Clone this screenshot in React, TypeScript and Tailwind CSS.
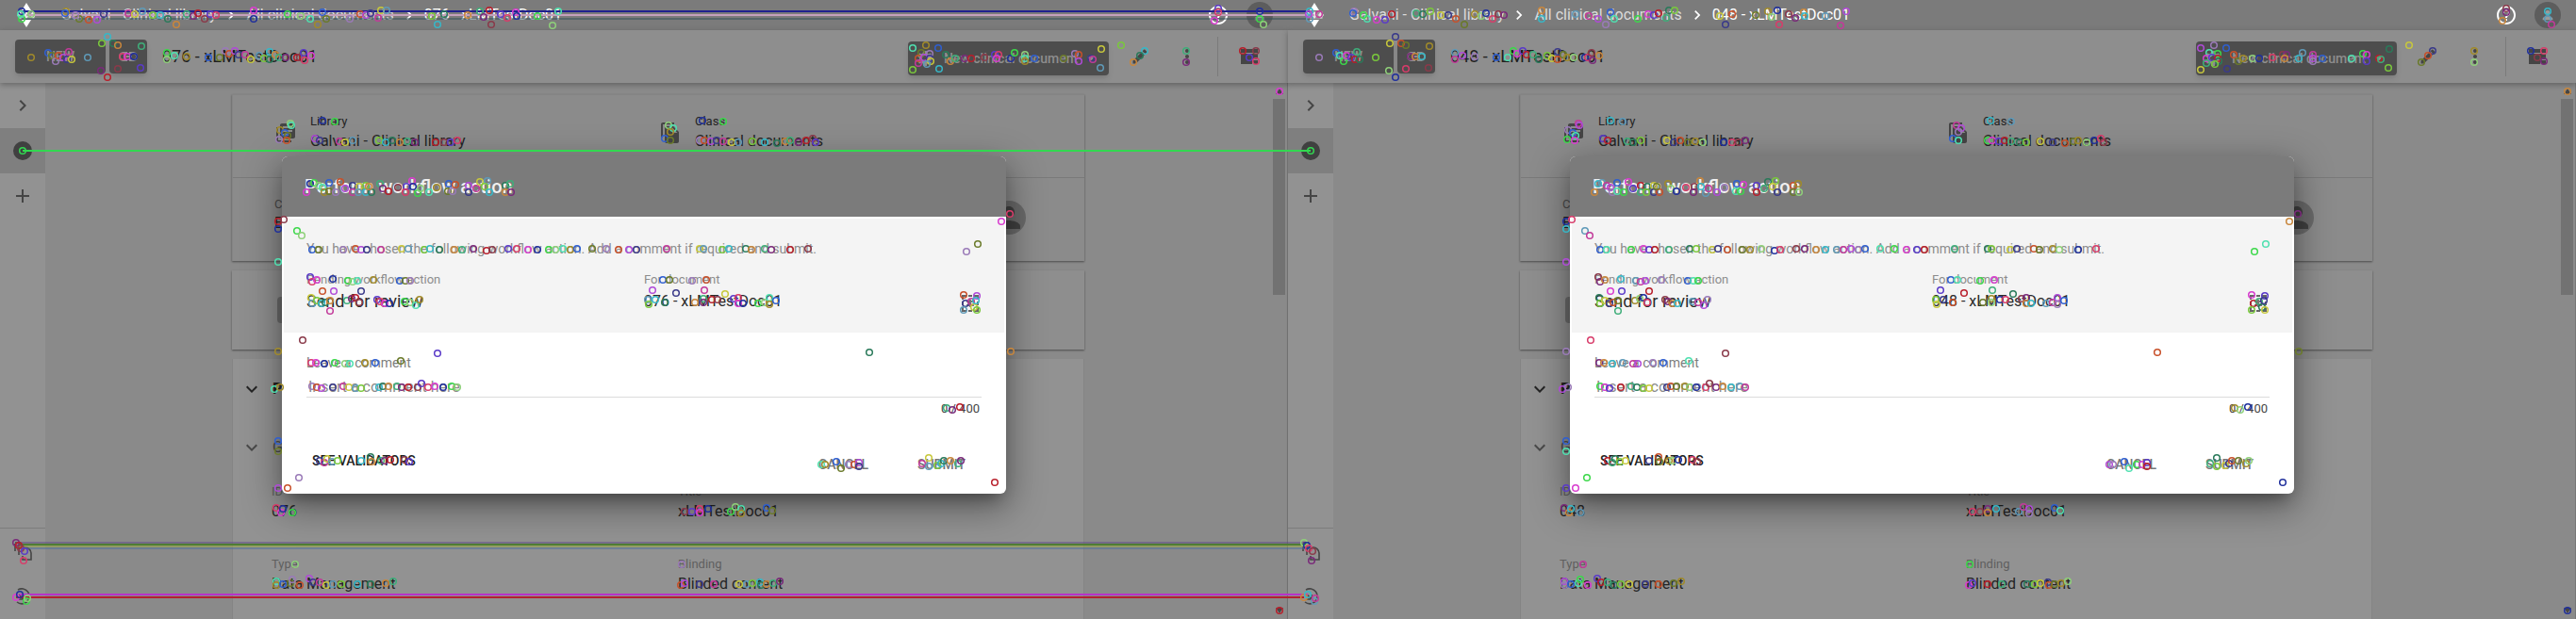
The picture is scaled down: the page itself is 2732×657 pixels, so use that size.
import React from "react";
import {
  MdAdd,
  MdArrowDropDown,
  MdChevronRight,
  MdEdit,
  MdExpandMore,
  MdFileCopy,
  MdHelpOutline,
  MdLibraryBooks,
  MdLink,
  MdMoreVert,
  MdPerson,
  MdSettings,
} from "react-icons/md";

type Point = [number, number];

/* Keypoints of one panel; each has a twin one panel to the right. */
const keypoints: Point[] = [
  [23, 12], [23, 20], [33, 15], [22, 15],
  [70, 12], [69, 14], [84, 20], [80, 16], [94, 21], [103, 21], [110, 15], [136, 14], [143, 15], [151, 12], [162, 16], [170, 16], [178, 20], [187, 26], [198, 15], [205, 17], [210, 14], [217, 20], [223, 15], [229, 16],
  [269, 11], [269, 20], [305, 15], [319, 17], [329, 20], [337, 26], [342, 13], [346, 20], [371, 20], [382, 15], [388, 16], [393, 14], [401, 19], [404, 11], [410, 11],
  [458, 17], [464, 26], [471, 15], [496, 16], [509, 12], [513, 18], [519, 11], [521, 26], [531, 15], [538, 19], [547, 13], [548, 17], [570, 17], [586, 27], [592, 12],
  [33, 61], [51, 56], [55, 59], [59, 65], [62, 59], [67, 61], [71, 63], [73, 55], [76, 63], [93, 61], [108, 46], [114, 39], [120, 46], [125, 48], [150, 49], [107, 75], [114, 82], [125, 73], [149, 72], [130, 60], [135, 60], [142, 60],
  [177, 56], [177, 63], [185, 59], [198, 60], [221, 61], [233, 61], [239, 54], [243, 57], [249, 54], [253, 58], [260, 58], [266, 63], [275, 59], [280, 62], [286, 55], [286, 63], [292, 58], [296, 61], [303, 61], [315, 61], [318, 61], [322, 56], [323, 64], [330, 59],
  [342, 128], [355, 129], [308, 131], [309, 133], [297, 138], [302, 141], [305, 144], [296, 148], [304, 149],
  [334, 147], [339, 149], [360, 150], [366, 151], [374, 149], [402, 149], [409, 151], [416, 149], [424, 151], [432, 150], [440, 151], [462, 151], [471, 151], [478, 151], [485, 149],
  [325, 204], [329, 195], [333, 194], [338, 197], [342, 199], [344, 204], [349, 194], [349, 203], [356, 204], [361, 193], [366, 200], [374, 197], [374, 204], [381, 198], [380, 204], [388, 197], [388, 204], [394, 204], [391, 198], [403, 195], [406, 200], [412, 203], [422, 199], [431, 198], [430, 204], [437, 192], [438, 198], [443, 205], [446, 200], [455, 204], [463, 199], [476, 195], [475, 203], [480, 203], [483, 196], [497, 197], [497, 204], [505, 200], [509, 193], [517, 192], [514, 198], [519, 204], [536, 197], [536, 204], [541, 195], [542, 204],
  [295, 235], [301, 233],
  [1292, 9], [1292, 13], [1288, 22], [1336, 12], [1336, 20], [1340, 26],
  [968, 51], [982, 48], [995, 51], [977, 56], [986, 57], [974, 62], [980, 61], [986, 62], [974, 67], [987, 65], [983, 68], [968, 74], [996, 73], [1003, 58], [1008, 65], [1013, 62], [1023, 62], [1030, 62], [1044, 61], [1055, 58], [1059, 58], [1057, 62], [1072, 62], [1076, 56], [1087, 58], [1087, 62], [1087, 65], [1097, 62], [1128, 62], [1140, 57], [1144, 58], [1144, 65], [1157, 62], [1159, 63], [1168, 52], [1167, 72], [1189, 48],
  [1214, 54], [1209, 59], [1202, 66], [1258, 54], [1258, 66], [1318, 54], [1332, 54], [1325, 61], [1332, 65],
  [1357, 97], [745, 128], [767, 129], [709, 133], [714, 136], [711, 140], [705, 147], [711, 149],
  [742, 149], [747, 149], [754, 150], [760, 149], [767, 150], [776, 151], [783, 151], [798, 150], [811, 151], [824, 152], [833, 150], [838, 149], [847, 151], [855, 149], [862, 147], [865, 151],
  [1071, 227], [1062, 235], [295, 243], [315, 245], [320, 250], [295, 278], [295, 373],
  [331, 265], [338, 265], [364, 265], [377, 264], [383, 265], [389, 265], [404, 265], [426, 264], [433, 264], [450, 265], [456, 264], [466, 265], [482, 265], [490, 265], [502, 264], [516, 266], [522, 265], [539, 264], [548, 264], [560, 265], [570, 265], [582, 265], [589, 265], [597, 264], [605, 265], [612, 264], [628, 264], [643, 264], [656, 265], [667, 265], [675, 265],
  [707, 264], [742, 264], [746, 264], [766, 265], [773, 264], [791, 264], [797, 265], [811, 264], [818, 265], [838, 265], [857, 264],
  [329, 294], [331, 299], [336, 297], [353, 296], [369, 298], [374, 299], [379, 298], [396, 297], [424, 298], [430, 298], [435, 298],
  [342, 309], [354, 309], [383, 309], [350, 330],
  [330, 316], [331, 322], [336, 319], [341, 322], [345, 321], [350, 319], [368, 319], [373, 317], [377, 316], [381, 321], [400, 318], [403, 320], [408, 322], [413, 322], [429, 320], [435, 321], [441, 324], [445, 318],
  [703, 297], [710, 297], [734, 298], [749, 297], [692, 308], [717, 311], [747, 308], [769, 312],
  [687, 318], [688, 323], [695, 318], [705, 321], [737, 321], [746, 317], [746, 321], [755, 318], [761, 318], [778, 317], [783, 316], [783, 322], [788, 322], [804, 322], [811, 321], [816, 316], [816, 323], [823, 319],
  [1037, 259], [1025, 267], [1022, 313], [1036, 314], [1024, 322], [1030, 320], [1033, 326], [1022, 329], [1036, 329], [1035, 319],
  [922, 374], [1072, 373], [1004, 433], [1010, 435], [1018, 432], [321, 361], [464, 375],
  [330, 385], [335, 385], [344, 386], [355, 385], [366, 386], [371, 386], [387, 385], [398, 385], [425, 383],
  [331, 410], [336, 411], [341, 412], [353, 411], [364, 410], [370, 411], [377, 412], [383, 412], [402, 411], [406, 410], [412, 410], [421, 410], [426, 411], [433, 411], [443, 411], [447, 407], [454, 411], [461, 410], [470, 411], [479, 410], [485, 411],
  [291, 413], [297, 411], [295, 468], [295, 479], [317, 507], [305, 518], [295, 518],
  [339, 489], [344, 491], [347, 487], [352, 490], [358, 489], [383, 489], [393, 485], [394, 490], [404, 489], [408, 489], [414, 488], [429, 488], [434, 490],
  [293, 539], [298, 544], [300, 540], [310, 544], [313, 599],
  [293, 617], [293, 621], [300, 620], [308, 619], [310, 615], [318, 621], [328, 614], [332, 618], [339, 618], [346, 621], [353, 620], [362, 620], [379, 620], [393, 620], [409, 619], [417, 617],
  [17, 576], [20, 579], [22, 582], [26, 585], [25, 595], [17, 634], [21, 631], [28, 638], [29, 635],
  [871, 493], [875, 493], [887, 490], [892, 497], [900, 493], [906, 493], [911, 491], [911, 495],
  [978, 492], [985, 486], [985, 495], [994, 494], [998, 492], [1001, 489], [1008, 489], [1016, 492], [1019, 489], [1055, 512],
  [726, 543], [734, 543], [742, 540], [742, 544], [751, 540], [775, 543], [780, 538], [786, 540], [786, 545], [813, 539], [819, 542],
  [723, 599], [722, 621], [726, 619], [742, 620], [757, 620], [784, 620], [792, 620], [798, 619], [806, 618], [807, 621], [813, 620], [820, 619], [827, 617], [1357, 648],
];

const palette = [
  "#1f2f9c", "#3fae7a", "#c23a9a", "#a08a2a", "#5a3ac8", "#36b8c8", "#c8502a", "#3cd84a", "#7a2a7a",
  "#c8c83c", "#2f5fd0", "#d83c6a", "#2a7a5a", "#b04ad8", "#8fd07a", "#b81e2a", "#5f9ab8", "#6a7a2a",
  "#d83ccf", "#c8863c", "#3a3a8a", "#4fe0b0", "#8a3a4a", "#7ac83c", "#9a7ab8",
];

const matches: { y: number; x: number; color: string; width: number }[] = [
  { y: 12, x: 23, color: "#20208f", width: 2 },
  { y: 16, x: 28, color: "#c4a0bd", width: 2 },
  { y: 20, x: 23, color: "#33505a", width: 1 },
  { y: 160, x: 24, color: "#32d850", width: 2 },
  { y: 576, x: 17, color: "#5f4a86", width: 1 },
  { y: 578, x: 20, color: "#4f7d33", width: 2 },
  { y: 580, x: 20, color: "#97a83e", width: 1 },
  { y: 582, x: 22, color: "#4a6f9c", width: 1 },
  { y: 631, x: 21, color: "#b832c8", width: 2 },
  { y: 634, x: 17, color: "#b3202e", width: 2 },
];

const SHIFT = 1366;

function MatchOverlay() {
  return (
    <svg
      width="2732"
      height="657"
      viewBox="0 0 2732 657"
      fill="none"
      aria-hidden="true"
    >
      {matches.map((m) => (
        <path key={m.y} d={`M${m.x} ${m.y}H${m.x + SHIFT}`} stroke={m.color} strokeWidth={m.width} />
      ))}
      {keypoints.map(([x, y], i) => (
        <g key={i} strokeWidth="1.5">
          <circle cx={x} cy={y} r="3.3" stroke={palette[(i * 7) % palette.length]} />
          <circle cx={x + SHIFT} cy={y} r="3.3" stroke={palette[(i * 11 + 5) % palette.length]} />
        </g>
      ))}
      {[24, 24 + SHIFT].map((x) => (
        <circle key={x} cx={x} cy="160" r="3.3" stroke="#32d850" strokeWidth="1.5" />
      ))}
    </svg>
  );
}

function Logo() {
  return (
    <svg width="20" height="26" viewBox="0 0 20 26" aria-hidden="true">
      <path d="M10 0l5 8H5zM10 26l5-8H5z" fill="#fff" />
      <path d="M1 9h18v8H1z" fill="#b5b5b5" opacity=".5" />
      <path d="M3 9l3 4-3 4-3-4zM17 9l3 4-3 4-3-4zM10 9l3 4-3 4-3-4z" fill="#e6e6e6" />
    </svg>
  );
}

function TopBar({ doc }: { doc: string }) {
  return (
    <header className="flex h-8 shrink-0 items-center bg-[#7b7b7b] pl-[18px] pr-4 text-base text-[#dcdcdc]">
      <Logo />
      <nav aria-label="Breadcrumb" className="ml-[27px] flex items-center">
        <a href="#library">Galvani - Clinical library</a>
        <MdChevronRight className="mx-1.5 size-5 text-white" />
        <a href="#documents">All clinical documents</a>
        <MdChevronRight className="mx-1.5 size-5 text-white" />
        <a href="#document" className="text-white">{doc}</a>
      </nav>
      <div className="ml-auto flex items-center gap-[18px]">
        <button aria-label="Help">
          <MdHelpOutline className="size-6 text-white" />
        </button>
        <button aria-label="Account" className="flex size-7 items-center justify-center rounded-full bg-[#5d5d5d]">
          <MdPerson className="size-4 text-[#9a9a9a]" />
        </button>
      </div>
    </header>
  );
}

function Toolbar({ doc }: { doc: string }) {
  return (
    <div className="z-10 flex h-14 shrink-0 items-center bg-[#8e8e8e] pl-4 pr-8 shadow-[0_2px_6px_rgba(0,0,0,0.3)]">
      <div className="flex gap-1 text-sm font-medium text-[#8e8e8e]">
        <button className="h-9 w-24 rounded bg-[#4d4d4d] shadow-md">NEW</button>
        <button aria-label="Copy link" className="flex h-9 w-10 items-center justify-center rounded bg-[#4d4d4d] shadow-md">
          <MdLink className="size-6" />
        </button>
      </div>
      <h1 className="ml-4 text-lg text-[#1f1f1f]">{doc}</h1>
      <div className="ml-auto flex items-center text-[#454545]">
        <button className="mt-1 flex h-9 w-[213px] items-center rounded-sm bg-[#4d4d4d] pl-2 text-sm font-medium text-[#8e8e8e] shadow-md">
          <MdSettings className="mr-2.5 size-5" />
          New clinical document
          <MdArrowDropDown className="ml-1 size-5" />
        </button>
        <button aria-label="Edit" className="ml-[23px]">
          <MdEdit className="size-5" />
        </button>
        <button aria-label="More actions" className="ml-7">
          <MdMoreVert className="size-6" />
        </button>
        <span className="ml-5 h-[42px] w-px bg-[#7a7a7a]" />
        <button aria-label="Table view" className="ml-6">
          <svg width="18" height="16" viewBox="0 0 18 16" fill="currentColor" aria-hidden="true">
            <path d="M0 0h18v4H0zM0 5h18v6h-6v5H0z" />
            <path d="M13 12h5v4h-5z" />
          </svg>
        </button>
      </div>
    </div>
  );
}

function Sidebar() {
  return (
    <aside className="flex w-12 shrink-0 flex-col bg-[#929292] text-[#454545] shadow-[1px_0_3px_rgba(0,0,0,0.25)]">
      <button aria-label="Expand" className="flex h-12 items-center justify-center">
        <MdChevronRight className="size-6" />
      </button>
      <button aria-label="Information" className="flex h-12 items-center justify-center bg-[#7f7f7f]">
        <span className="flex size-5 items-center justify-center rounded-full bg-[#404040]" />
      </button>
      <button aria-label="Add" className="flex h-12 items-center justify-center">
        <MdAdd className="size-6" />
      </button>
      <div className="mt-auto flex flex-col border-t border-[#7c7c7c]">
        <button aria-label="Clipboard" className="flex h-12 items-center justify-center">
          <svg width="20" height="22" viewBox="0 0 20 22" fill="none" stroke="currentColor" strokeWidth="1.6" aria-hidden="true">
            <path d="M2 11V3M6 15V7M2 2h6M6 7h3M12 7h1c3 0 6 3 6 6v7h-9v-4" />
          </svg>
        </button>
        <button aria-label="History" className="flex h-12 items-center justify-center">
          <svg width="20" height="20" viewBox="0 0 20 20" fill="none" stroke="currentColor" strokeWidth="1.6" aria-hidden="true">
            <path d="M5 3a8 8 0 1 1-1 13M6 8l5 5M11 8v5H6" />
          </svg>
        </button>
      </div>
    </aside>
  );
}

function Field({ label, value }: { label: string; value: string }) {
  return (
    <div>
      <dt className="text-[13px] leading-4 text-[#5f5f5f]">{label}</dt>
      <dd className="mt-px text-base leading-6 text-[#242424]">{value}</dd>
    </div>
  );
}

function Record({ number }: { number: string }) {
  return (
    <main className="min-w-0 flex-1 overflow-hidden bg-[#8a8a8a] pt-3 text-[#242424]">
      <div className="mx-auto flex h-full max-w-[904px] flex-col">
        <section className="h-[177px] shrink-0 border-l border-t border-[#848484] bg-[#8b8b8b] shadow-[0_1px_2px_rgba(0,0,0,0.45)]">
          <div className="grid h-[88px] grid-cols-[408px_1fr] items-start border-b border-[#7a7a7a] pl-[44px] pt-5">
            {[
              { label: "Library", value: "Galvani - Clinical library", Icon: MdLibraryBooks },
              { label: "Class", value: "Clinical documents", Icon: MdFileCopy },
            ].map(({ label, value, Icon }) => (
              <div key={label} className="flex">
                <Icon className="mr-[14px] mt-2 size-6 text-[#454545]" />
                <div>
                  <p className="text-[13px] leading-4">{label}</p>
                  <p className="mt-px text-base leading-6">{value}</p>
                </div>
              </div>
            ))}
          </div>
          <div className="flex items-start justify-between pl-[44px] pr-[62px] pt-5">
            <div>
              <p className="text-[13px] leading-4 text-[#4a4a4a]">Created by</p>
              <p className="text-base leading-6">Editor</p>
            </div>
            <span className="mt-1 flex size-9 items-end justify-center rounded-full bg-[#6a6a6a]">
              <MdPerson className="size-9 text-[#404040]" />
            </span>
          </div>
        </section>
        <section className="mt-2.5 flex h-[84px] shrink-0 items-center bg-[#8e8e8e] pl-12 shadow-[0_1px_2px_rgba(0,0,0,0.45)]">
          <span className="h-7 w-8 rounded bg-[#6c6c6c]" />
        </section>
        <section className="mt-2.5 flex-1 border-x border-[#848484] bg-[#929292] pl-2 pt-5">
          <h2 className="flex h-6 items-center gap-2.5 text-base font-bold">
            <MdExpandMore className="size-6" />
            Properties
          </h2>
          <h3 className="mt-[38px] flex h-6 items-center gap-2.5 text-base text-[#4a4a4a]">
            <MdExpandMore className="size-6" />
            General
          </h3>
          <dl className="mt-[27px] grid grid-cols-[431px_1fr] gap-y-9 pl-[33px]">
            <Field label="ID" value={number} />
            <Field label="Title" value="xLMTestDoc01" />
            <Field label="Type" value="Data Management" />
            <Field label="Blinding" value="Blinded content" />
          </dl>
        </section>
      </div>
    </main>
  );
}

function WorkflowDialog({ doc, id }: { doc: string; id: string }) {
  return (
    <div
      role="dialog"
      aria-labelledby={`${id}-title`}
      className="flex w-[768px] flex-col overflow-hidden rounded-md bg-white shadow-[0_11px_15px_-7px_rgba(0,0,0,0.3),0_12px_38px_3px_rgba(0,0,0,0.4)]"
    >
      <h2 id={`${id}-title`} className="flex h-16 items-center bg-[#7b7b7b] px-6 text-xl font-medium text-[#f0f0f0]">
        Perform workflow action
      </h2>
      <div className="mx-0.5 mt-0.5 bg-[#f4f4f4] px-6 pb-[21px] pt-[22px] text-[#8c8c8c]">
        <p className="text-sm leading-5">
          You have chosen the following workflow action. Add a comment if required and submit.
        </p>
        <div className="mt-[15px] grid grid-cols-2">
          <div>
            <p className="text-[13px] leading-4">Pending workflow action</p>
            <p className="mt-[3px] text-lg leading-6 text-[#2b2b2b]">Send for review</p>
          </div>
          <div className="flex items-end justify-between">
            <div>
              <p className="text-[13px] leading-4">For document</p>
              <p className="mt-[3px] text-base leading-6 text-[#2b2b2b]">{doc}</p>
            </div>
            <svg className="mr-0.5" width="20" height="20" viewBox="0 0 20 20" fill="none" stroke="#666" strokeWidth="2" aria-hidden="true">
              <path d="M2 6V2h4M8 2h4M14 2h4v4M18 8v4M18 14v4h-4M12 18H8M6 18H2v-4M2 12V8" />
              <path d="M6 8h8M6 12h8M10 6v8" stroke="#777" />
            </svg>
          </div>
        </div>
      </div>
      <form className="px-[26px] pb-[13px] pt-6" onSubmit={(e) => e.preventDefault()}>
        <label htmlFor={`${id}-comment`} className="block text-sm leading-4 text-[#7d7d7d]">
          Leave a comment
        </label>
        <input
          id={`${id}-comment`}
          placeholder="Insert a comment here"
          className="mt-1 block h-[25px] w-full border-b border-[#dcdcdc] px-0.5 pt-1 text-base outline-none placeholder:text-[#8c8c8c]"
        />
        <p className="mt-1 pr-0.5 text-right text-[13px] leading-4 text-[#444]">0 / 400</p>
        <div className="mt-[29px] flex justify-between text-sm font-medium">
          <button type="button" className="h-9 px-1.5 text-[#1f1f1f]">SEE VALIDATORS</button>
          <div className="mt-1 flex gap-[18px] text-[#777]">
            <button type="button" className="h-9 px-[17px]">CANCEL</button>
            <button type="submit" className="h-9 px-[17px]">SUBMIT</button>
          </div>
        </div>
      </form>
    </div>
  );
}

function Panel({ number }: { number: string }) {
  const doc = `${number} - xLMTestDoc01`;
  return (
    <div className="relative flex min-w-0 flex-col">
      <TopBar doc={doc} />
      <Toolbar doc={doc} />
      <div className="flex min-h-0 flex-1">
        <Sidebar />
        <Record number={number} />
        <div className="flex w-[18px] shrink-0 flex-col items-center border-r border-[#777] bg-[#8a8a8a] pb-1.5 pt-1.5 text-[#454545]">
          <svg width="8" height="6" viewBox="0 0 8 6" fill="currentColor" aria-hidden="true"><path d="M4 0l4 6H0z" /></svg>
          <span className="mt-[5px] h-[208px] w-[13px] bg-[#727272]" />
          <svg className="mt-auto" width="8" height="6" viewBox="0 0 8 6" fill="currentColor" aria-hidden="true"><path d="M4 6L0 0h8z" /></svg>
        </div>
      </div>
      <div className="absolute inset-x-0 bottom-0 top-8 z-20 flex items-center justify-center">
        <WorkflowDialog doc={doc} id={`doc-${number}`} />
      </div>
    </div>
  );
}

export default function App() {
  return (
    <div className="relative grid h-screen grid-cols-2 overflow-hidden bg-[#8a8a8a] font-[Roboto,'Liberation_Sans',sans-serif]">
      <Panel number="076" />
      <Panel number="048" />
      <div className="pointer-events-none absolute left-0 top-0 z-30">
        <MatchOverlay />
      </div>
    </div>
  );
}
